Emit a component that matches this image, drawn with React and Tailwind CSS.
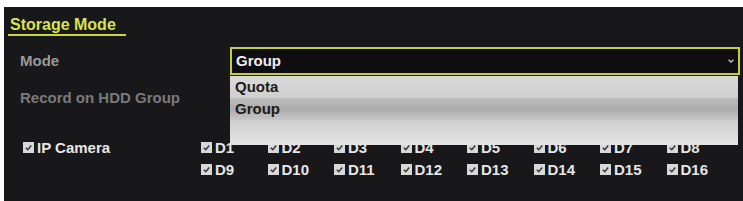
import React from "react";

function Check({ label }) {
  return (
    <div className="flex h-[15px] items-center gap-[3px]">
      <span className="flex h-[11px] w-[11px] shrink-0 items-center justify-center bg-[#d8d8d8]">
        <svg viewBox="0 0 10 10" className="h-[9px] w-[9px]">
          <path d="M2 5.2 L4.2 7.4 L8 2.8" fill="none" stroke="#333" strokeWidth="1.6" />
        </svg>
      </span>
      <span className="text-[15px] font-bold leading-none text-[#e6e6e6]">{label}</span>
    </div>
  );
}

export default function App() {
  const row1 = ["D1", "D2", "D3", "D4", "D5", "D6", "D7", "D8"];
  const row2 = ["D9", "D10", "D11", "D12", "D13", "D14", "D15", "D16"];
  return (
    <div
      className="h-[201px] w-[743px] bg-white pl-[4px] pt-[7px]"
      style={{ fontFamily: '"Liberation Sans", Arial, sans-serif' }}
    >
      <div className="relative flex h-[194px] flex-col bg-[#18181a]">
        <div className="ml-[4px] mt-[10px] w-[118px] border-b-2 border-[#c9d640] pb-[1px] pl-[2px]">
          <div className="text-[16px] font-bold leading-none text-[#dbe24e]">Storage Mode</div>
        </div>

        <div className="mt-[11px] flex h-[28px] items-center">
          <div className="w-[226px] pl-[16px] text-[15px] font-bold text-[#999999]">Mode</div>
          <div className="mr-[3px] flex h-[28px] flex-1 items-center justify-between border-2 border-[#c3d03c] bg-[#0e0d12] pl-[4px] pr-[3px]">
            <span className="text-[15px] font-bold text-[#f0f0f0]">Group</span>
            <svg viewBox="0 0 10 10" className="h-[8px] w-[8px]">
              <path d="M2 3.5 L5 6.5 L8 3.5" fill="none" stroke="#d0d0d0" strokeWidth="1.6" />
            </svg>
          </div>
        </div>

        <div className="mt-[12px] flex h-[22px] items-center">
          <div className="w-[226px] pl-[16px] text-[15px] font-bold text-[#7a7a7a]">Record on HDD Group</div>
        </div>

        <div className="mt-[31px] flex items-start">
          <div className="w-[197px] pl-[19px]">
            <Check label="IP Camera" />
          </div>
          <div className="grid grid-cols-[repeat(8,66.5px)] gap-y-[7px]">
            {row1.map((d) => (
              <Check key={d} label={d} />
            ))}
            {row2.map((d) => (
              <Check key={d} label={d} />
            ))}
          </div>
        </div>

        <div className="absolute left-[226px] top-[69px] flex h-[69px] w-[508px] flex-col bg-[#d3d3d3]">
          <div className="flex h-[22px] items-center bg-gradient-to-b from-[#dadada] to-[#cfcfcf] pl-[5px] text-[15px] font-bold text-[#1a1a1a]">
            Quota
          </div>
          <div className="flex h-[22px] items-center bg-gradient-to-b from-[#bdbdbd] via-[#ababab] to-[#c6c6c6] pl-[5px] text-[15px] font-bold text-[#1a1a1a]">
            Group
          </div>
          <div className="flex-1 bg-gradient-to-b from-[#cfcfcf] to-[#e4e4e4]" />
        </div>
      </div>
    </div>
  );
}
